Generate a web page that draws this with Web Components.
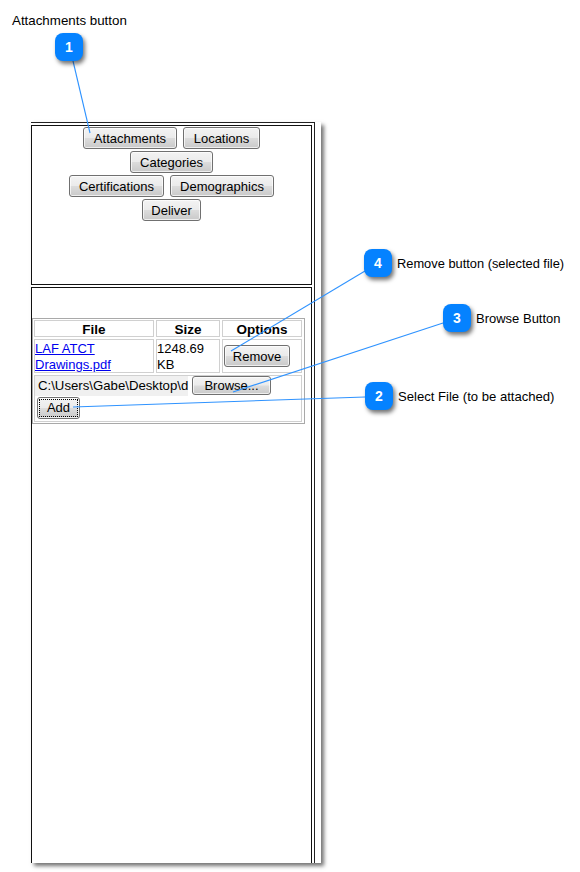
<!DOCTYPE html>
<html>
<head>
<meta charset="utf-8">
<title>Attachments button</title>
<style>
  html, body { margin: 0; padding: 0; background: #fff; }
  body { font-family: "Liberation Sans", Arial, sans-serif; font-size: 13px; color: #000; }
</style>
</head>
<body>
<help-page>
  <span slot="title">Attachments button</span>
  <app-frame>
    <button-panel slot="top">
      <button-row><ui-button width="94">Attachments</ui-button><ui-button width="77">Locations</ui-button></button-row>
      <button-row><ui-button width="83">Categories</ui-button></button-row>
      <button-row><ui-button width="95">Certifications</ui-button><ui-button width="104">Demographics</ui-button></button-row>
      <button-row><ui-button width="59">Deliver</ui-button></button-row>
    </button-panel>
    <file-table slot="bottom"></file-table>
  </app-frame>
  <call-lines></call-lines>
  <call-out n="1" x="55" y="33"></call-out>
  <call-out n="2" x="365" y="382" gap="5" size="13.1">Select File (to be attached)</call-out>
  <call-out n="3" x="443" y="304" gap="5" size="13">Browse Button</call-out>
  <call-out n="4" x="364" y="249" gap="5" size="12.85">Remove button (selected file)</call-out>
</help-page>

<script>
function define(name, css, html, init) {
  customElements.define(name, class extends HTMLElement {
    connectedCallback() {
      if (this.shadowRoot) return;
      this.attachShadow({ mode: 'open' });
      this.shadowRoot.innerHTML = '<style>' + css + '</style>' + html;
      if (init) init(this);
    }
  });
}

const buttonFace = `
  box-sizing: border-box;
  border: 1px solid #707070;
  border-radius: 3px;
  background: linear-gradient(#f3f3f3 0%, #ebebeb 48%, #dcdcdc 52%, #c9c9c9 100%);
  box-shadow: inset 0 0 0 1px rgba(255,255,255,.7);
`;

define('help-page', `
  :host { display: block; position: relative; width: 580px; height: 872px; overflow: hidden; }
  .title { padding: 13px 0 0 12px; height: 122px; box-sizing: border-box; line-height: 16px; font-size: 13.33px; }
`, `
  <div class="title"><slot name="title"></slot></div>
  <slot></slot>
`);

define('app-frame', `
  :host { display: block; box-sizing: border-box; width: 290px; height: 741px; margin-left: 31px;
    background: #fff; box-shadow: 3px 3px 4px rgba(0,0,0,.55); }
  .outer { box-sizing: border-box; width: 284px; height: 741px; border-top: 1px solid #222; border-right: 1px solid #222;
    padding-top: 2px; display: flex; flex-direction: column; gap: 2px; }
  .top { box-sizing: border-box; height: 160px; border: 1px solid #111; width: 281px; }
  .bottom { box-sizing: border-box; flex: 1; border: 1px solid #111; border-bottom: 0; width: 281px; }
`, `
  <div class="outer">
    <div class="top"><slot name="top"></slot></div>
    <div class="bottom"><slot name="bottom"></slot></div>
  </div>
`);

define('button-panel', `
  :host { display: flex; flex-direction: column; gap: 2px; padding-top: 1px; }
`, `<slot></slot>`);

define('button-row', `
  :host { display: flex; justify-content: center; gap: 6px; }
`, `<slot></slot>`);

define('ui-button', `
  :host { display: block; }
  button { ${buttonFace} display: block; height: 22px; padding: 0; margin: 0; font: inherit; color: #000; text-align: center; }
`, `<button><slot></slot></button>`, el => {
  el.shadowRoot.querySelector('button').style.width = el.getAttribute('width') + 'px';
});

define('file-table', `
  :host { display: block; padding: 30px 0 0 0; }
  .tbl { box-sizing: border-box; width: 273px; border: 1px solid #a9a9a9; padding: 1px; display: grid;
    grid-template-columns: 120px 64px 80px; column-gap: 2px; row-gap: 2px; }
  .cell { box-sizing: border-box; border: 1px solid #d0d0d0; line-height: 16px; }
  .head { height: 17px; font-weight: bold; text-align: center; font-size: 13.5px; line-height: 17px; }
  .row { height: 34px; padding-top: 1px; }
  a { color: #0000ee; text-decoration: underline; }
  .opt { padding: 5px 0 0 1px; }
  .opt button { width: 66px; padding-top: 1px; }
  button { ${buttonFace} display: block; height: 22px; padding: 0; margin: 0; font: inherit; color: #000; }
  .add-row { grid-column: 1 / -1; height: 47px; }
  .pick { display: flex; gap: 4px; height: 21px; }
  .path { box-sizing: border-box; width: 153px; height: 20px; background: #f0f0f0; padding-left: 3px; line-height: 20px; white-space: nowrap; font-size: 13.2px; }
  .browse { width: 79px; height: 19px; line-height: 15px; }
  .add { width: 43px; margin-left: 2px; }
  .add span { outline: 1px dotted #000; display: block; margin: 2px; line-height: 16px; }
`, `
  <div class="tbl">
    <div class="cell head">File</div>
    <div class="cell head">Size</div>
    <div class="cell head">Options</div>
    <div class="cell row"><a href="#">LAF ATCT Drawings.pdf</a></div>
    <div class="cell row">1248.69 KB</div>
    <div class="cell row opt"><button>Remove</button></div>
    <div class="cell add-row">
      <div class="pick">
        <div class="path">C:\\Users\\Gabe\\Desktop\\d</div>
        <button class="browse">Browse...</button>
      </div>
      <button class="add"><span>Add</span></button>
    </div>
  </div>
`);

define('call-lines', `
  :host { display: block; position: absolute; left: 0; top: 0; width: 580px; height: 872px; pointer-events: none; }
  svg { display: block; }
  line { stroke: #2f93ff; stroke-width: 1.1; }
`, `
  <svg width="580" height="872" viewBox="0 0 580 872">
    <line x1="73" y1="61" x2="90" y2="133"/>
    <line x1="365" y1="271" x2="231" y2="351"/>
    <line x1="443" y1="323" x2="233" y2="392"/>
    <line x1="365" y1="397" x2="73" y2="407"/>
  </svg>
`);

define('call-out', `
  :host { display: flex; align-items: center; position: absolute; white-space: nowrap; }
  .badge { width: 28px; height: 28px; box-sizing: border-box; border-radius: 8px; background: #0582ff; color: #fff;
    font-weight: bold; font-size: 14px; display: flex; align-items: center; justify-content: center;
    box-shadow: 2px 3px 4px rgba(0,0,0,.55); }
`, `
  <div class="badge"></div>
  <div class="text"><slot></slot></div>
`, el => {
  el.style.left = el.getAttribute('x') + 'px';
  el.style.top = el.getAttribute('y') + 'px';
  el.shadowRoot.querySelector('.badge').textContent = el.getAttribute('n');
  const text = el.shadowRoot.querySelector('.text');
  text.style.marginLeft = (el.getAttribute('gap') || 0) + 'px';
  if (el.getAttribute('size')) text.style.fontSize = el.getAttribute('size') + 'px';
});
</script>
</body>
</html>
